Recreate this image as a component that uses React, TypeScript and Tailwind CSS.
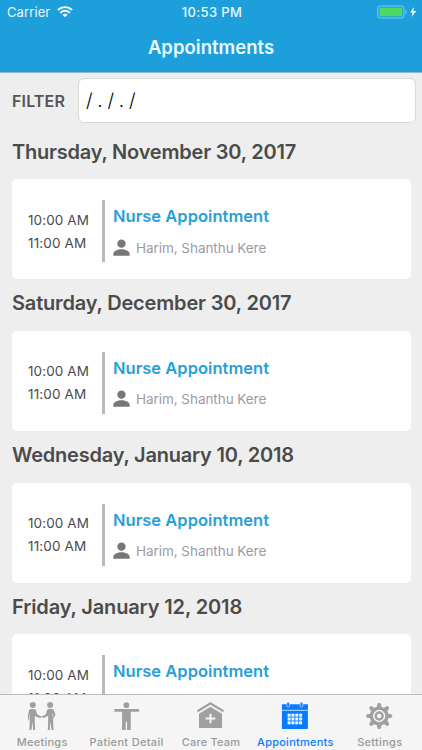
import React from "react";

const sections = [
  { date: "Thursday, November 30, 2017", tracking: "tracking-[-0.210px]" },
  { date: "Saturday, December 30, 2017", tracking: "tracking-[-0.170px]" },
  { date: "Wednesday, January 10, 2018", tracking: "tracking-[-0.210px]" },
  { date: "Friday, January 12, 2018", tracking: "tracking-[-0.130px]" },
];

function StatusBar() {
  return (
    <div className="grid h-6 grid-cols-3 items-center text-[13px] leading-6 text-[#e9f8ff]">
      <div className="flex items-center gap-[7px] pl-[7px]">
        <span className="tracking-[0.1px]">Carrier</span>
        <svg width="16" height="12" viewBox="0 0 48 36" fill="none" stroke="#effaff" strokeWidth="5.500">
          <path d="M2.500 12.500C14 .5 34 .5 45.500 12.500" />
          <path d="M9.500 20.500C18 12 30 12 38.500 20.500" />
          <path d="M24 34l-8-8c4.500-4 11.500-4 16 0z" fill="#effaff" stroke="none" />
        </svg>
      </div>
      <div className="pl-[2px] text-center font-medium tracking-[0.350px] whitespace-nowrap">10:53 PM</div>
      <div className="flex justify-end pr-[5px]">
        <svg width="42" height="16" viewBox="0 0 42 16">
          <rect x="2.700" y="2" width="26.200" height="12" rx="2.200" fill="none" stroke="#7cc9f1" />
          <rect x="4.400" y="3.700" width="22.800" height="8.600" rx="0.800" fill="#4cd964" />
          <path d="M30.300 6v4c1.700-.5 1.700-3.500 0-4z" fill="#7cc9f1" />
          <path d="M39 3L35 8.500h2.500L36.500 13l4.800-6h-2.900z" fill="#effaff" />
        </svg>
      </div>
    </div>
  );
}

function Section({ date, tracking }: { date: string; tracking: string }) {
  return (
    <section className="h-[151.800px]">
      <div className="flex h-11 items-center border-b border-[#f1f1f1] pt-[2px] pl-3">
        <h2 className={"text-[20px] font-semibold leading-6 whitespace-nowrap text-[#4b4b4b] " + tracking}>{date}</h2>
      </div>
      <div className="mr-[11.500px] ml-[11.500px] mt-[6px] flex h-[100.200px] rounded-[5px] bg-white">
        <div className="mt-[28px] mb-[24px] w-[90.500px] shrink-0 pl-[16.500px] text-[13.500px] whitespace-nowrap text-[#4b4b4b]">
          <div className="mt-[1.500px] leading-[23px] tracking-[0.100px]">10:00 AM</div>
          <div className="leading-[23px] tracking-[0.150px]">11:00 AM</div>
        </div>
        <div className="mt-[21px] mb-[17px] w-[2.500px] shrink-0 bg-[#b9b9b9]" />
        <div className="pl-[8.500px]">
          <div className="mt-[25px] text-[16.500px] font-semibold leading-6 tracking-[0.030px] whitespace-nowrap text-[#289fd6]">Nurse Appointment</div>
          <div className="mt-[8.500px] flex items-center">
            <svg width="17" height="18" viewBox="0 0 51 54" fill="#777">
              <circle cx="25.500" cy="14" r="12.500" />
              <path d="M1 50v-5C1 36 15 31 25.500 31S50 36 50 45v5z" />
            </svg>
            <span className="ml-[6px] text-[13.500px] leading-[22px] tracking-[-0.050px] whitespace-nowrap text-[#9b9ba5]">Harim, Shanthu Kere</span>
          </div>
        </div>
      </div>
    </section>
  );
}

function MeetingsIcon() {
  return (
    <svg width="50" height="40" viewBox="-8.400 0 150 120" fill="#a0a0a0">
      <circle cx="39" cy="30" r="9" />
      <circle cx="91" cy="30" r="9" />
      <path d="M33 42h11q4 0 5 5l3 11 8 4 5 2-2 4h-6l-10-4-2-2v14l1 29h-6l-2-25-3 25h-6l1-35V57l-2 9 1 10h-3l-2-11 3-17q2-6 6-6z" />
      <path fillRule="evenodd" d="M97 42H86q-4 0-5 5l-3 11-8 4-5 2 2 4h6l10-4 2-2v14l-1 29h6l2-25 3 25h6l-1-35 6-8 1-5-5-10q-1-5-5-5zm1 13l3 5-3 5z" />
    </svg>
  );
}

function PatientIcon() {
  return (
    <svg width="50" height="40" viewBox="4.800 0 150 120" fill="#a0a0a0">
      <circle cx="78" cy="30.500" r="8.500" />
      <path d="M42 42h74v8H91v55H80V80h-4v25H65V50H42z" />
    </svg>
  );
}

function CareIcon() {
  return (
    <svg width="50" height="40" viewBox="3 0 150 120" fill="#a0a0a0">
      <path d="M36 46L76 21l41 25-3 6-38-23-37 23z" />
      <path fillRule="evenodd" d="M42 56l34-21 35 21v43H42zM73.500 56v11.500H62v6h11.500V85h6V73.500H91v-6H79.500V56z" />
    </svg>
  );
}

function CalendarIcon() {
  return (
    <svg width="50" height="40" viewBox="1.200 0 150 120">
      <path d="M37 28h78v72q0 2-2 2H39q-2 0-2-2z" fill="#087cff" />
      <path d="M37 46h78" stroke="#bcdcff" strokeWidth="3" />
      <rect x="51.500" y="22" width="8" height="14" rx="4" fill="#087cff" stroke="#d5e8fc" strokeWidth="2" />
      <rect x="91.500" y="22" width="8" height="14" rx="4" fill="#087cff" stroke="#d5e8fc" strokeWidth="2" />
      {[56, 67.500, 79].map((y) =>
        [54, 65.500, 77, 88.500].map((x) => <rect key={x + "-" + y} x={x} y={y} width="9" height="9" fill="#eef6ff" />)
      )}
    </svg>
  );
}

function GearIcon() {
  return (
    <svg width="50" height="40" viewBox="2.400 0 150 120" fill="#a0a0a0">
      {[0, 45, 90, 135, 180, 225, 270, 315].map((angle) => (
        <path key={angle} d="M67.500 38l2-10q.7-4 3.500-4h4q2.800 0 3.500 4l2 10z" transform={`rotate(${angle} 75 63)`} />
      ))}
      <circle cx="75" cy="63" r="23.500" fill="none" stroke="#a0a0a0" strokeWidth="10" />
      <circle cx="75" cy="63" r="10.500" fill="none" stroke="#a0a0a0" strokeWidth="7" />
    </svg>
  );
}

const tabs = [
  { label: "Meetings", icon: <MeetingsIcon />, style: "text-[#999] tracking-[0.250px]" },
  { label: "Patient Detail", icon: <PatientIcon />, style: "text-[#999] tracking-[0.330px]" },
  { label: "Care Team", icon: <CareIcon />, style: "text-[#999] tracking-[0.220px]" },
  { label: "Appointments", icon: <CalendarIcon />, style: "text-[#087cff] tracking-[0.250px]" },
  { label: "Settings", icon: <GearIcon />, style: "text-[#999] tracking-[0.300px]" },
];

export default function App() {
  return (
    <div className="flex h-[750px] w-[422px] flex-col overflow-hidden bg-[#eee] font-['Inter','Liberation_Sans',sans-serif]">
      <header className="h-[73px] shrink-0 border-b border-[#8db9cf] bg-[#1d9fdb]">
        <StatusBar />
        <h1 className="text-center text-[18.500px] font-semibold leading-[47px] tracking-[0.020px] text-[#eaf9ff]">Appointments</h1>
      </header>
      <main className="min-h-0 flex-1 overflow-hidden">
        <div className="flex h-14 items-start pt-[4.500px] pr-[6px] pl-3">
          <label className="w-[66px] text-[16px] font-semibold leading-[46px] tracking-[0.150px] text-[#555]">FILTER</label>
          <div className="h-[45px] flex-1 rounded-[6px] border border-[#d8d8d8] bg-white pl-[7px] text-[19px] font-light leading-[43px] tracking-[-0.300px] whitespace-pre text-black">/ . / . /</div>
        </div>
        {sections.map((section) => (
          <Section key={section.date} {...section} />
        ))}
      </main>
      <nav className="grid h-14 shrink-0 grid-cols-5 border-t border-[#bdbdbd] bg-[#f5f5f5]">
        {tabs.map((tab) => (
          <div key={tab.label} className={"flex flex-col items-center text-[11px] font-medium whitespace-nowrap " + tab.style}>
            {tab.icon}
            <span className="leading-[14px]">{tab.label}</span>
          </div>
        ))}
      </nav>
    </div>
  );
}
